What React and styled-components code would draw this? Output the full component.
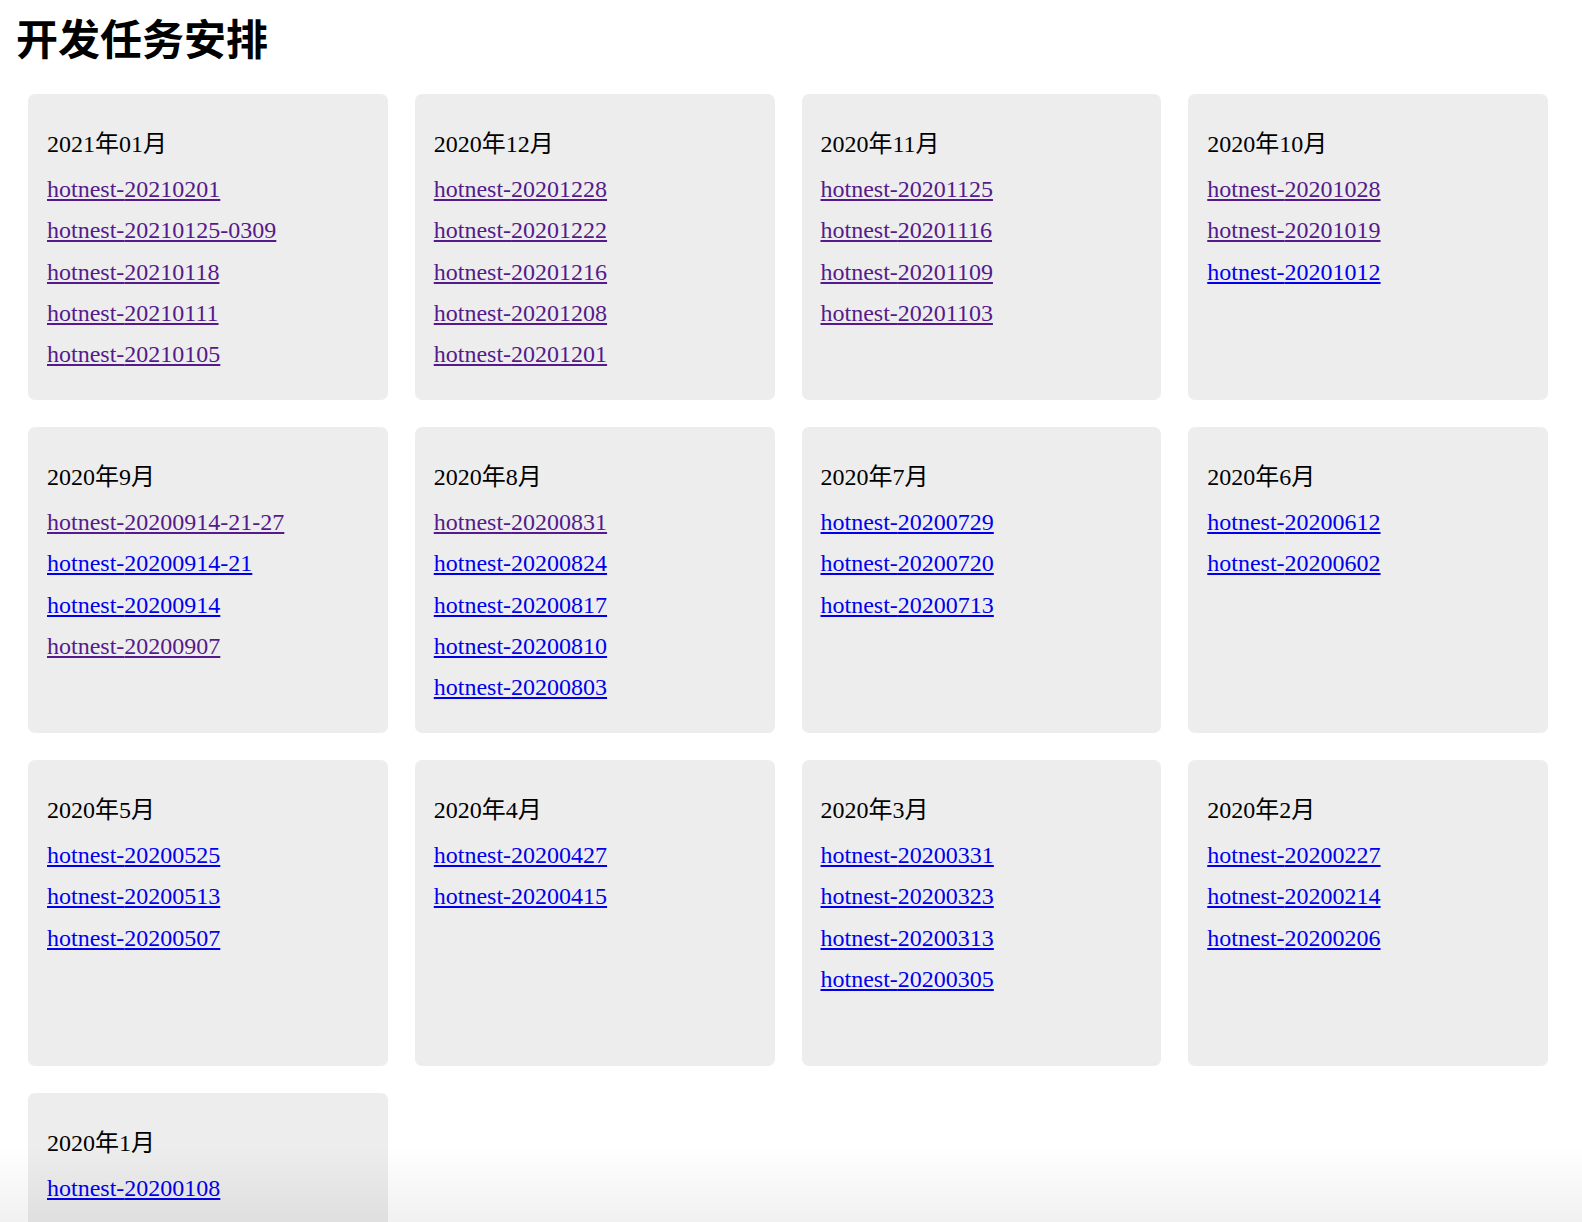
import React from "react";
import styled, { createGlobalStyle } from "styled-components";

const GlobalStyle = createGlobalStyle`
  body {
    margin: 0;
    background: #fff;
    font-family: "Liberation Serif", "Noto Sans CJK SC", serif;
  }
`;

const Page = styled.div`
  padding: 16px 34px 40px 0;
`;

const Title = styled.h1`
  margin: 0 0 36px 16px;
  font-family: "Noto Sans CJK SC", sans-serif;
  font-size: 42px;
  line-height: 42px;
  font-weight: 700;
  color: #000;
`;

const Grid = styled.div`
  display: grid;
  grid-template-columns: repeat(4, 1fr);
  column-gap: 27px;
  row-gap: 27px;
  margin-left: 28px;
`;

const Card = styled.section`
  box-sizing: border-box;
  min-height: 306px;
  padding: 30px 19px 24px;
  background: #ededed;
  border-radius: 7px;
`;

const Month = styled.div`
  height: 45px;
  font-size: 24px;
  line-height: 41px;
  color: #000;
`;

const Item = styled.a`
  display: block;
  width: fit-content;
  font-size: 24px;
  line-height: 41.25px;
  color: ${(p) => (p.$visited ? "#551a8b" : "#0000ee")};
  text-decoration: underline;
`;

const Fade = styled.div`
  position: fixed;
  left: 0;
  right: 0;
  bottom: 0;
  height: 76px;
  pointer-events: none;
  background: linear-gradient(to bottom, rgba(0, 0, 0, 0), rgba(0, 0, 0, 0.055));
`;

// v = visited link
const months = [
  { label: "2021年01月", links: [["20210201", 1], ["20210125-0309", 1], ["20210118", 1], ["20210111", 1], ["20210105", 1]] },
  { label: "2020年12月", links: [["20201228", 1], ["20201222", 1], ["20201216", 1], ["20201208", 1], ["20201201", 1]] },
  { label: "2020年11月", links: [["20201125", 1], ["20201116", 1], ["20201109", 1], ["20201103", 1]] },
  { label: "2020年10月", links: [["20201028", 1], ["20201019", 1], ["20201012", 0]] },
  { label: "2020年9月", links: [["20200914-21-27", 1], ["20200914-21", 0], ["20200914", 0], ["20200907", 1]] },
  { label: "2020年8月", links: [["20200831", 1], ["20200824", 0], ["20200817", 0], ["20200810", 0], ["20200803", 0]] },
  { label: "2020年7月", links: [["20200729", 0], ["20200720", 0], ["20200713", 0]] },
  { label: "2020年6月", links: [["20200612", 0], ["20200602", 0]] },
  { label: "2020年5月", links: [["20200525", 0], ["20200513", 0], ["20200507", 0]] },
  { label: "2020年4月", links: [["20200427", 0], ["20200415", 0]] },
  { label: "2020年3月", links: [["20200331", 0], ["20200323", 0], ["20200313", 0], ["20200305", 0]] },
  { label: "2020年2月", links: [["20200227", 0], ["20200214", 0], ["20200206", 0]] },
  { label: "2020年1月", links: [["20200108", 0]] },
];

export default function App() {
  return (
    <Page>
      <GlobalStyle />
      <Title>开发任务安排</Title>
      <Grid>
        {months.map((m) => (
          <Card key={m.label}>
            <Month>{m.label}</Month>
            {m.links.map(([id, v]) => (
              <Item key={id} href={`#hotnest-${id}`} $visited={!!v}>
                hotnest-{id}
              </Item>
            ))}
          </Card>
        ))}
      </Grid>
      <Fade />
    </Page>
  );
}
